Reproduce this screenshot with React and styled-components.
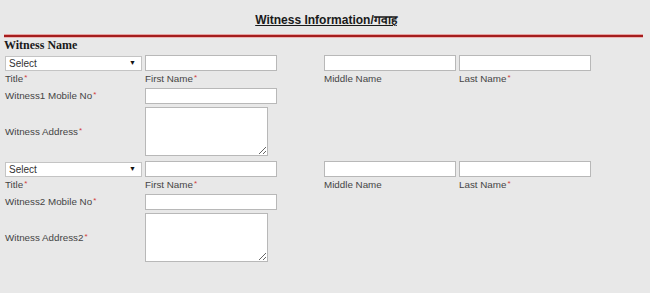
import React from 'react'
import styled, { createGlobalStyle } from 'styled-components'

const GlobalStyle = createGlobalStyle`
  html, body {
    margin: 0;
    padding: 0;
    background: #e8e8e8;
  }
  body {
    font-family: "Liberation Sans", Arial, sans-serif;
  }
`

const Page = styled.div`
  width: 650px;
  height: 293px;
  background: #e8e8e8;
  overflow: hidden;
`

const Title = styled.div`
  padding-top: 13px;
  text-align: center;
  line-height: 14px;
  font-size: 12px;
  font-weight: bold;
  color: #1a1a1a;
  padding-left: 2px;

  span {
    text-decoration: underline;
    text-underline-offset: 1px;
  }
`

const RedRule = styled.div`
  margin: 7px 7px 0 4px;
  height: 2px;
  background: #a51d1d;
  border-top: 1px solid #e6a3a3;
  border-bottom: 1px solid #e9b5b5;
`

const SectionHeading = styled.div`
  padding-left: 4px;
  font-family: "Liberation Serif", "Times New Roman", serif;
  font-weight: bold;
  font-size: 12px;
  line-height: 14px;
  color: #1a1a1a;
`

const Form = styled.div`
  padding: 3px 0 0 5px;
  display: flex;
  flex-direction: column;
  gap: 5px;
`

const Group = styled.div`
  display: grid;
  grid-template-columns: 140px 179px 135px 135px;
  grid-template-rows: 16px 17px 16px 52px;

  & > :nth-last-child(-n + 2) {
    margin-top: 3px;
  }
`

const Cell = styled.div`
  display: flex;
  align-items: ${(p) => (p.$top ? 'flex-start' : 'center')};
  grid-column: ${(p) => p.$span || 'auto'};
  padding-top: ${(p) => (p.$top ? '2px' : '0')};
  min-width: 0;
`

const Label = styled.span`
  font-size: 9.8px;
  line-height: 12px;
  color: #454545;
  white-space: nowrap;
`

const Req = styled.span`
  position: relative;
  top: -2px;
  margin-left: 1px;
  color: #d23a3a;
  font-size: 8px;
  line-height: 0;
`

const TextBox = styled.input`
  box-sizing: border-box;
  width: 132px;
  height: 16px;
  margin: 0;
  padding: 0 3px;
  border: 1px solid #b8b8b8;
  background: #fff;
  font-size: 10px;
  outline: none;
`

const Area = styled.textarea`
  box-sizing: border-box;
  width: 123px;
  height: 49px;
  margin: 0;
  padding: 2px;
  border: 1px solid #b8b8b8;
  background: #fff;
  font-size: 10px;
  outline: none;
`

const SelectWrap = styled.div`
  position: relative;
  width: 137px;
  height: 15px;
`

const Select = styled.select`
  display: block;
  appearance: none;
  box-sizing: border-box;
  width: 137px;
  height: 15px;
  margin: 0;
  padding: 0 0 0 3px;
  border: 1px solid #c4c4c4;
  border-radius: 0;
  background: #fff;
  font-family: "Liberation Sans", Arial, sans-serif;
  font-size: 10px;
  line-height: 13px;
  color: #333;
  outline: none;
`

const Arrow = styled.span`
  position: absolute;
  right: 6px;
  top: 3px;
  font-size: 7px;
  line-height: 8px;
  color: #111;
  pointer-events: none;
`

function Required({ children }) {
  return (
    <Label>
      {children}
      <Req>*</Req>
    </Label>
  )
}

function WitnessGroup({ n }) {
  return (
    <Group>
      <Cell>
        <SelectWrap>
          <Select defaultValue="">
            <option value="">Select</option>
            <option>Mr.</option>
            <option>Mrs.</option>
            <option>Ms.</option>
          </Select>
          <Arrow>▼</Arrow>
        </SelectWrap>
      </Cell>
      <Cell>
        <TextBox />
      </Cell>
      <Cell>
        <TextBox />
      </Cell>
      <Cell>
        <TextBox />
      </Cell>

      <Cell $top>
        <Required>Title</Required>
      </Cell>
      <Cell $top>
        <Required>First Name</Required>
      </Cell>
      <Cell $top>
        <Label>Middle Name</Label>
      </Cell>
      <Cell $top>
        <Required>Last Name</Required>
      </Cell>

      <Cell>
        <Required>{`Witness${n} Mobile No`}</Required>
      </Cell>
      <Cell $span="2 / 5">
        <TextBox />
      </Cell>

      <Cell>
        <Required>{n === 1 ? 'Witness Address' : 'Witness Address2'}</Required>
      </Cell>
      <Cell $span="2 / 5">
        <Area />
      </Cell>
    </Group>
  )
}

export default function App() {
  return (
    <Page>
      <GlobalStyle />
      <Title>
        <span>Witness Information/गवाह</span>
      </Title>
      <RedRule />
      <SectionHeading>Witness Name</SectionHeading>
      <Form>
        <WitnessGroup n={1} />
        <WitnessGroup n={2} />
      </Form>
    </Page>
  )
}
